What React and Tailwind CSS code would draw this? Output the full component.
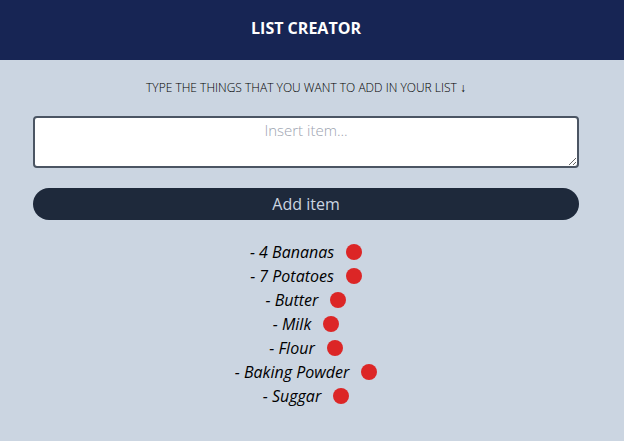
const items = [
  "4 Bananas",
  "7 Potatoes",
  "Butter",
  "Milk",
  "Flour",
  "Baking Powder",
  "Suggar",
];

export default function App() {
  return (
    <div className="min-h-screen bg-[#cbd5e1] text-center font-['Open_Sans','Noto_Sans',sans-serif] text-black">
      <header className="bg-[#172554] pt-4 pr-3 pb-5">
        <h1 className="text-base leading-6 font-bold text-white">LIST CREATOR</h1>
      </header>
      <main className="pt-5 pr-3">
        <label htmlFor="item" className="block text-[12px] leading-4 font-light">
          TYPE THE THINGS THAT YOU WANT TO ADD IN YOUR LIST{" "}
          <span className="font-['Liberation_Sans',sans-serif]">↓</span>
        </label>
        <form className="mt-5 px-[33px]" onSubmit={(e) => e.preventDefault()}>
          <textarea
            id="item"
            rows={2}
            placeholder="Insert item..."
            className="block h-[52px] w-full rounded border-2 border-[#4b5563] bg-white text-center text-[15px] leading-6 font-light placeholder:text-[#9ca3af]"
          />
          <button
            type="submit"
            className="mt-5 block h-8 w-full rounded-full bg-[#1e293b] text-base leading-6 text-[#cbd5e1]"
          >
            Add item
          </button>
        </form>
        <ul className="mt-5 text-base leading-6 italic">
          {items.map((name) => (
            <li key={name} className="flex items-center justify-center gap-3">
              <span>- {name}</span>
              <button
                type="button"
                aria-label={`Remove ${name}`}
                className="size-4 rounded-full bg-[#dc2626]"
              />
            </li>
          ))}
        </ul>
      </main>
    </div>
  );
}
